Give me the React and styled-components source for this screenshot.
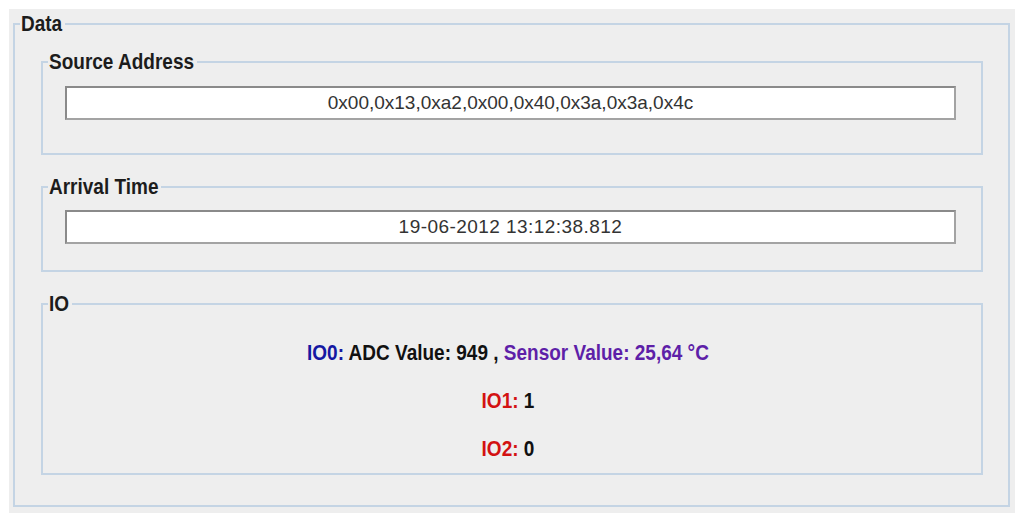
import React from 'react';
import styled, { createGlobalStyle } from 'styled-components';

const GlobalStyle = createGlobalStyle`
  html, body {
    margin: 0;
    padding: 0;
    background: #ffffff;
    font-family: 'Liberation Sans', Arial, sans-serif;
  }
`;

const Panel = styled.div`
  margin: 9px 0 0 9px;
  width: 1006px;
  height: 504px;
  box-sizing: border-box;
  padding: 4px 5px 6px 4px;
  background: #eeeeee;
`;

const Frame = styled.fieldset`
  margin: ${(p) => p.$margin || '0'};
  padding: 0;
  min-width: 0;
  border: 2px solid #c4d4e4;
`;

// the old swing screenshot is stretched vertically, so the bold text is too
const Legend = styled.legend`
  margin-left: 5px;
  padding: 0 3px 0 1px;
  font-size: 19px;
  line-height: 22px;
  font-weight: bold;
  color: #1c1c1c;
  transform: scaleY(1.17);
`;

const FrameBody = styled.div`
  padding: ${(p) => p.$pad};
`;

const Field = styled.div`
  height: 34px;
  box-sizing: border-box;
  display: flex;
  align-items: center;
  justify-content: center;
  background: #ffffff;
  border: 2px solid;
  border-color: #8a8a8a #a3a3a3 #a3a3a3 #8a8a8a;
  font-size: 19px;
  letter-spacing: ${(p) => p.$spacing || '0'};
  color: #333333;
`;

const IoRow = styled.div`
  height: 48px;
  display: flex;
  align-items: center;
  justify-content: center;
  font-size: 19px;
  font-weight: bold;
  color: #111111;
  white-space: pre;
  transform: scaleY(1.17);
`;

const Tone = styled.span`
  color: ${(p) => p.$color};
`;

const BLUE = '#1518a2';
const PURPLE = '#5e1fa8';
const RED = '#d31212';

export default function App() {
  return (
    <>
      <GlobalStyle />
      <Panel>
        <Frame>
          <Legend>Data</Legend>
          <FrameBody $pad='16px 25px 30px 26px'>
            <Frame $margin='0 0 21px 0'>
              <Legend>Source Address</Legend>
              <FrameBody $pad='13px 25px 33px 22px'>
                <Field>0x00,0x13,0xa2,0x00,0x40,0x3a,0x3a,0x4c</Field>
              </FrameBody>
            </Frame>
            <Frame $margin='0 0 21px 0'>
              <Legend>Arrival Time</Legend>
              <FrameBody $pad='12px 25px 26px 22px'>
                <Field $spacing='0.45px'>19-06-2012 13:12:38.812</Field>
              </FrameBody>
            </Frame>
            <Frame>
              <Legend>IO</Legend>
              <FrameBody $pad='14px 8px 0 0'>
                <IoRow>
                  <Tone $color={BLUE}>IO0:</Tone> ADC Value: 949 ,{' '}
                  <Tone $color={PURPLE}>Sensor Value: 25,64 °C</Tone>
                </IoRow>
                <IoRow>
                  <Tone $color={RED}>IO1:</Tone> 1
                </IoRow>
                <IoRow>
                  <Tone $color={RED}>IO2:</Tone> 0
                </IoRow>
              </FrameBody>
            </Frame>
          </FrameBody>
        </Frame>
      </Panel>
    </>
  );
}
